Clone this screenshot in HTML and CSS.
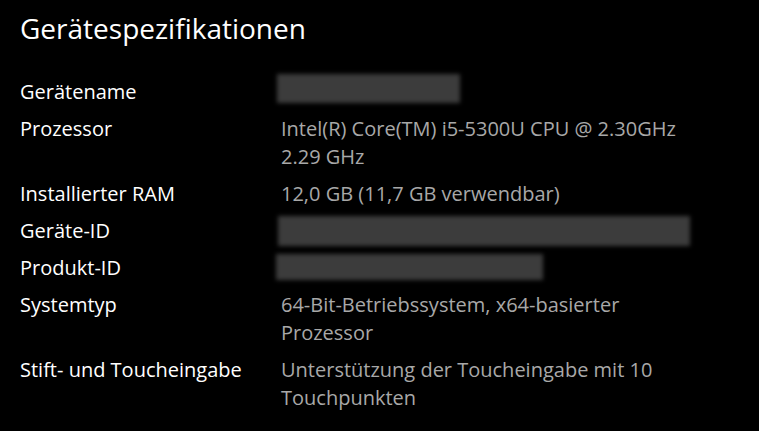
FILE: index.html
```html
<!DOCTYPE html>
<html lang="de">
<head>
<meta charset="utf-8">
<link rel="stylesheet" href="styles.css">
</head>
<body>
<main class="page">
  <h1 class="title">Gerätespezifikationen</h1>
  <div class="specs">
    <div class="label">Gerätename</div>
    <div class="value"><div class="redact r-name"></div></div>
    <div class="label">Prozessor</div>
    <div class="value">Intel(R) Core(TM) i5-5300U CPU @ 2.30GHz<br>2.29 GHz</div>
    <div class="label">Installierter RAM</div>
    <div class="value">12,0 GB (11,7 GB verwendbar)</div>
    <div class="label">Geräte-ID</div>
    <div class="value"><div class="redact r-device"></div></div>
    <div class="label">Produkt-ID</div>
    <div class="value"><div class="redact r-product"></div></div>
    <div class="label">Systemtyp</div>
    <div class="value">64-Bit-Betriebssystem, x64-basierter<br>Prozessor</div>
    <div class="label">Stift- und Toucheingabe</div>
    <div class="value">Unterstützung der Toucheingabe mit 10<br>Touchpunkten</div>
  </div>
</main>
</body>
</html>
```
FILE: styles.css
```css
html, body {
  margin: 0;
  padding: 0;
  background: #000;
}
.page {
  padding: 8px 20px 0 20px;
  font-family: "Open Sans", "Noto Sans", sans-serif;
  color: #fff;
}
.title {
  margin: 0;
  font-size: 28px;
  font-weight: 400;
  line-height: 40px;
}
.specs {
  margin-top: 30px;
  display: grid;
  grid-template-columns: 261px 1fr;
  row-gap: 9px;
  font-size: 20px;
  line-height: 28px;
}
.label {
  color: #fff;
}
.value {
  color: #a8a8a8;
}
.redact {
  height: 28px;
  background: #3c3c3c;
  filter: blur(2px);
}
.r-name { width: 183px; height: 29px; margin: -4px 0 0 -4px; }
.r-device { width: 412px; height: 30px; margin: -1px 0 -1px -3px; }
.r-product { width: 267px; height: 26px; margin: 0 0 0 -5px; }
```
